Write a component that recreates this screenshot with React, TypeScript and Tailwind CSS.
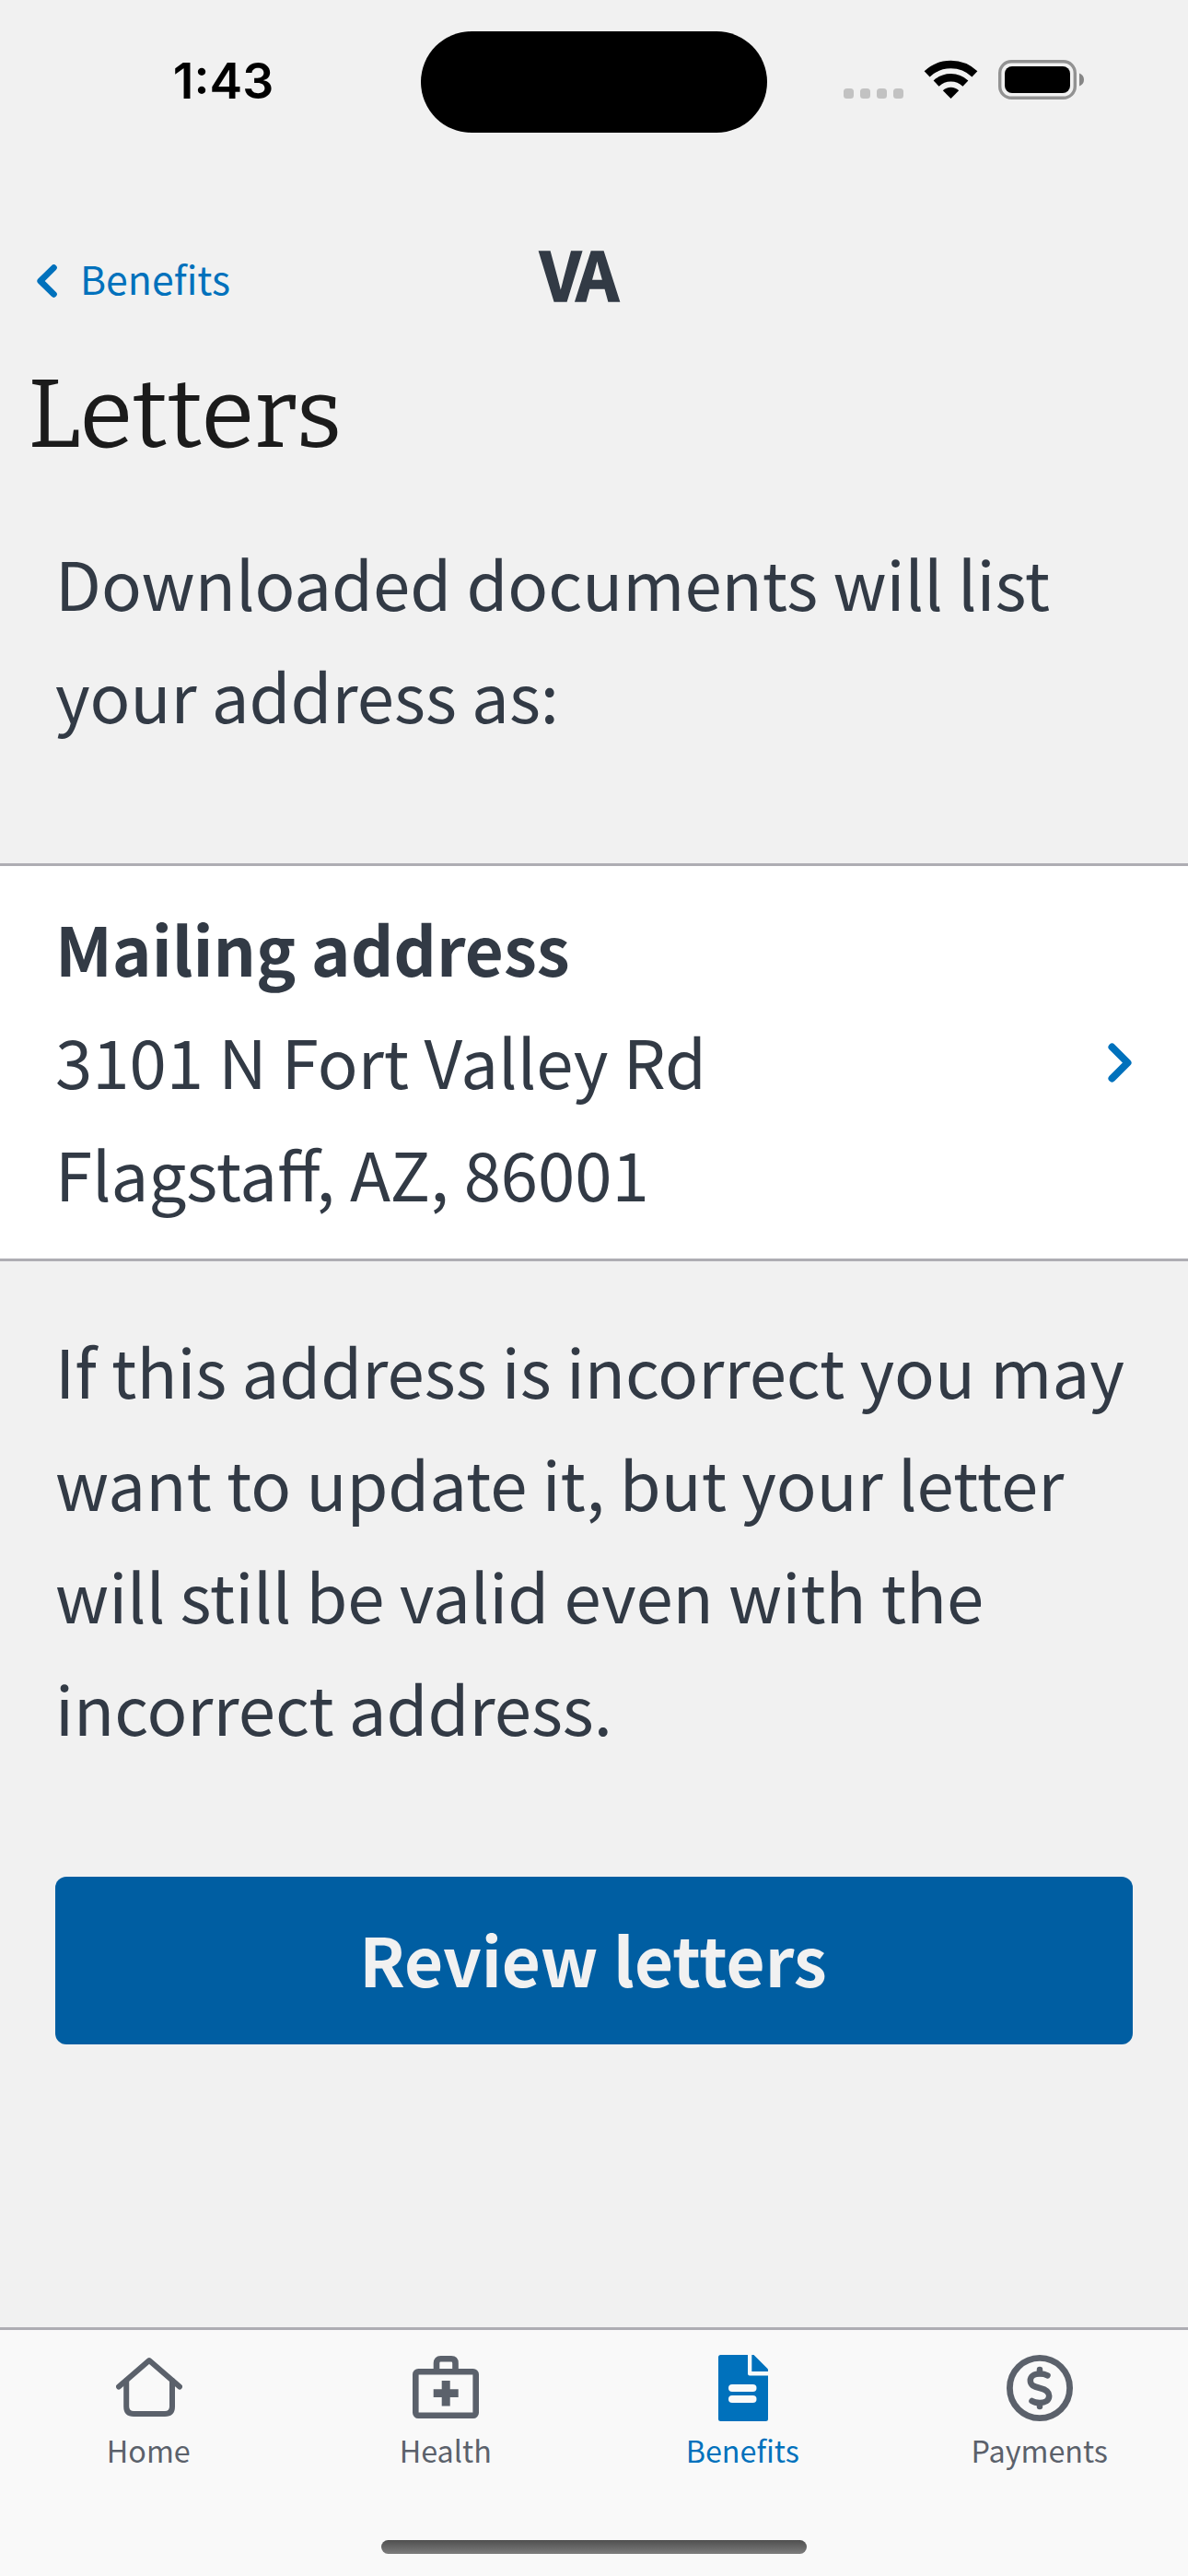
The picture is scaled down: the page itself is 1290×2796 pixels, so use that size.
import type { ReactNode } from "react";

function StatusBar() {
  return (
    <header className="flex h-[177px] items-start pt-[34px]">
      <div className="flex w-[457px] justify-center pt-[21px] pl-[28px] font-['Inter',sans-serif] text-[53.5px] leading-[66px] font-semibold text-black">
        1:43
      </div>
      <div className="h-[110px] w-[376px] rounded-full bg-black" />
      <svg className="mt-[26px] ml-[73px] h-[56px] w-[290px]" viewBox="906 60 290 56" fill="none">
        <g fill="#c2c2c2">
          <rect x="916" y="96" width="11" height="11" rx="3.5" />
          <rect x="934" y="96" width="11" height="11" rx="3.5" />
          <rect x="952" y="96" width="11" height="11" rx="3.5" />
          <rect x="970" y="96" width="11" height="11" rx="3.5" />
        </g>
        <g stroke="#000" strokeWidth="8.6">
          <path d="M1006.6 80.4A37.5 37.5 0 0 1 1058.4 80.4" />
          <path d="M1016.6 90.6A23 23 0 0 1 1048.4 90.6" />
        </g>
        <path d="M1032.500 107L1023.800 98.200A12.400 12.400 0 0 1 1041.200 98.200Z" fill="#000" />
        <rect x="1085.700" y="66.700" width="81.600" height="39.600" rx="12.500" stroke="#929292" strokeWidth="3.400" />
        <rect x="1091" y="72" width="71" height="29" rx="8" fill="#000" />
        <path d="M1172 79.500Q1177 81.500 1177 86.500T1172 93.500Z" fill="#868686" />
      </svg>
    </header>
  );
}

function NavBar() {
  return (
    <nav className="flex h-[223px] items-start pt-[89px]">
      <div className="flex w-[586px] items-center pl-[40px] text-[#0071bc]">
        <svg className="mt-[8px] h-[36px] w-[22px]" viewBox="0 0 22 36" fill="none" stroke="currentColor" strokeWidth="6.800" strokeLinecap="round" strokeLinejoin="round">
          <path d="M18.400 3.600L3.800 18L18.400 32.400" />
        </svg>
        <span className="pl-[25px] text-[42.8px] leading-[70px]">Benefits</span>
      </div>
      <div className="mt-[-4px] text-[73px] leading-[66px] font-bold tracking-[-4.5px] text-[#323a45] [-webkit-text-stroke:1.5px_#323a45]">VA</div>
    </nav>
  );
}

function Chevron() {
  return (
    <svg className="h-[43px] w-[26px]" viewBox="0 0 26 43" fill="none" stroke="#0071bc" strokeWidth="8" strokeLinecap="round" strokeLinejoin="round">
      <path d="M4.500 4.500L21.500 21.500L4.500 38.500" />
    </svg>
  );
}

function Tab({ label, active = false, children }: { label: string; active?: boolean; children: ReactNode }) {
  return (
    <div className={active ? "flex flex-1 flex-col items-center text-[#0071bc]" : "flex flex-1 flex-col items-center text-[#5b616b]"}>
      <svg className="h-[72px] w-[72px]" viewBox="0 0 72 72" fill="none">
        {children}
      </svg>
      <span className="pt-[8px] pr-px text-[32.3px] leading-[47px]">{label}</span>
    </div>
  );
}

function TabBar() {
  return (
    <footer className="flex h-[270px] flex-col border-t-[3px] border-[#aeadb3] bg-[#f9f9f9] pt-[27px]">
      <div className="ml-[0.5px] flex h-[201px] w-[1290px]">
        <Tab label="Home">
          <g stroke="currentColor" strokeWidth="6" strokeLinecap="round" strokeLinejoin="round">
            <path d="M3 34.500L36 6L69 34.500" />
            <path d="M11.200 28V56Q11.200 64 19.200 64H53Q61 64 61 56V28" />
          </g>
        </Tab>
        <Tab label="Health">
          <g stroke="currentColor" strokeWidth="6.600" strokeLinejoin="round">
            <rect x="3.300" y="18.300" width="65.400" height="47.400" rx="3" />
            <path d="M26 18V9Q26 4.300 30.500 4.300H42Q46.500 4.300 46.500 9V18" />
          </g>
          <path d="M31.700 28h9v9.300h9v8.700h-9v9.500h-9V46h-9v-8.700h9z" fill="currentColor" />
        </Tab>
        <Tab label="Benefits" active>
          <path d="M11.500 0H41V20.500Q41 22.500 43 22.500H63V69.500Q63 72 60.500 72H11.500Q9 72 9 69.500V2.500Q9 0 11.500 0Z" fill="currentColor" />
          <path d="M45.300 0H47.500L63 15.500V18H45.300Z" fill="currentColor" />
          <g fill="#f9f9f9">
            <rect x="20" y="32" width="30.500" height="8" rx="4" />
            <rect x="20" y="44" width="30.500" height="8" rx="4" />
          </g>
        </Tab>
        <Tab label="Payments">
          <g stroke="currentColor" strokeLinecap="round">
            <circle cx="36" cy="36" r="32.600" strokeWidth="6.800" />
            <path d="M44.500 22.300Q41 20.500 36 20.500C29.500 20.500 25.800 23.500 25.800 27.800C25.800 33 29.500 34.500 36 36C42.500 37.500 46.200 39.800 46.200 44.500C46.200 49.500 42 52 36 52Q30.500 52 27.500 50" strokeWidth="6.500" />
            <path d="M36 16V20M36 53V56" strokeWidth="6.500" />
          </g>
        </Tab>
      </div>
      <div className="mx-auto h-[15px] w-[462px] rounded-full bg-linear-to-b from-[#4f4f4f] to-[#7d7d7d]" />
    </footer>
  );
}

export default function App() {
  return (
    <div className="flex h-[2796px] w-[1290px] flex-col overflow-hidden bg-[#f1f1f1] font-['Noto_Sans_CJK_SC',sans-serif] text-[72.5px] leading-[122px] text-[#323a45]">
      <StatusBar />
      <NavBar />
      <h1 className="h-[171px] pl-[30px] font-['Bitter','Noto_Serif',serif] text-[105px] leading-[100px] text-[#1b1b1b]">Letters</h1>
      <p className="h-[366px] px-[60px]">
        Downloaded documents will list
        <br />
        your address as:
      </p>
      <section className="flex h-[432px] items-center justify-between border-y-[3px] border-[#aeadb3] bg-white pr-[61px] pl-[60px]">
        <div className="pb-[4px]">
          <div className="font-bold">Mailing address</div>
          <div>3101 N Fort Valley Rd</div>
          <div>Flagstaff, AZ, 86001</div>
        </div>
        <Chevron />
      </section>
      <p className="h-[668px] pt-[57px] pl-[60px] whitespace-nowrap">
        If this address is incorrect you may
        <br />
        want to update it, but your letter
        <br />
        will still be valid even with the
        <br />
        incorrect address.
      </p>
      <button className="mx-[60px] h-[182px] shrink-0 rounded-[12px] bg-[#005ea2] pr-[2px] pb-[4px] text-[72.7px] font-bold text-[#f1f1f1]">Review letters</button>
      <div className="flex-1" />
      <TabBar />
    </div>
  );
}
